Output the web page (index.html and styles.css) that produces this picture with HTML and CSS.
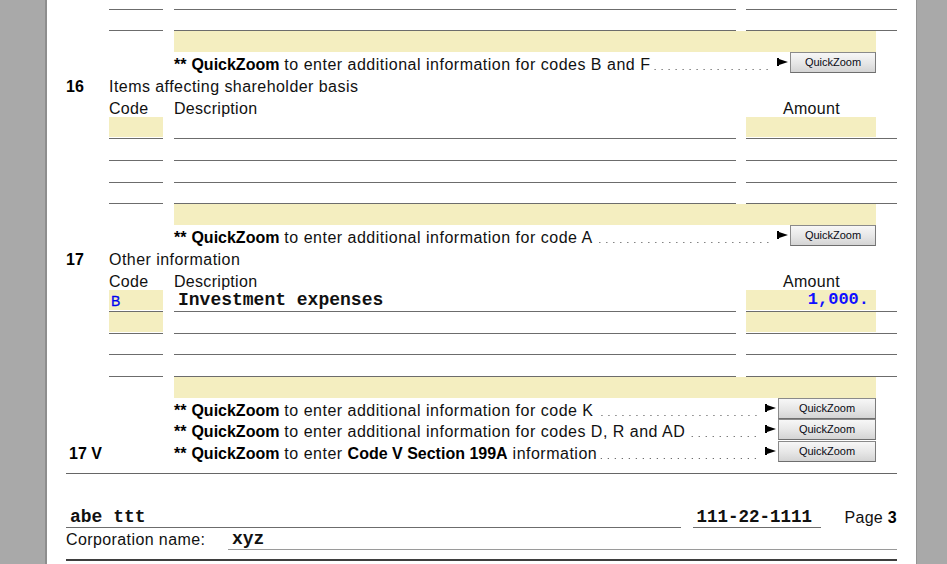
FILE: index.html
```html
<!DOCTYPE html>
<html>
<head>
<meta charset="utf-8">
<link rel="stylesheet" href="styles.css">
</head>
<body>
<div class="screen">
  <div class="gutter gutter-left"></div>
  <div class="page">
    <div class="form">
      <div class="row frow h10"><span></span><div class="f"></div><span></span><div class="f"></div><span></span><div class="f"></div></div>
      <div class="row frow h21"><span></span><div class="f"></div><span></span><div class="f"></div><span></span><div class="f"></div></div>
      <div class="row ybar"><div class="bar"></div></div>
      <div class="row qz h22">
        <div class="qzbox">
          <span class="qztext"><b>**</b> <b>QuickZoom</b> to enter additional information for codes B and F</span>
          <span class="leader"></span>
          <svg class="arrow" width="11" height="8" viewBox="0 0 11 8"><path d="M0 0H2V1L11 4L2 7V8H0Z" fill="#000"/></svg>
          <span class="btn">QuickZoom</span>
        </div>
      </div>
      <div class="row title h22"><span class="num">16</span><span class="label">Items affecting shareholder basis</span></div>
      <div class="row head h21"><span></span><span class="c-code">Code</span><span></span><span class="c-desc">Description</span><span></span><span class="c-amt">Amount</span></div>
      <div class="row frow h22"><span></span><div class="f"><div class="fill"></div></div><span></span><div class="f"></div><span></span><div class="f"><div class="fill amtfill"></div></div></div>
      <div class="row frow h22"><span></span><div class="f"></div><span></span><div class="f"></div><span></span><div class="f"></div></div>
      <div class="row frow h22"><span></span><div class="f"></div><span></span><div class="f"></div><span></span><div class="f"></div></div>
      <div class="row frow h21"><span></span><div class="f"></div><span></span><div class="f"></div><span></span><div class="f"></div></div>
      <div class="row ybar"><div class="bar"></div></div>
      <div class="row qz h22">
        <div class="qzbox">
          <span class="qztext"><b>**</b> <b>QuickZoom</b> to enter additional information for code A</span>
          <span class="leader"></span>
          <svg class="arrow" width="11" height="8" viewBox="0 0 11 8"><path d="M0 0H2V1L11 4L2 7V8H0Z" fill="#000"/></svg>
          <span class="btn">QuickZoom</span>
        </div>
      </div>
      <div class="row title h22"><span class="num">17</span><span class="label">Other information</span></div>
      <div class="row head h21"><span></span><span class="c-code">Code</span><span></span><span class="c-desc">Description</span><span></span><span class="c-amt">Amount</span></div>
      <div class="row frow h22"><span></span><div class="f"><div class="fill code-val">B</div></div><span></span><div class="f"><div class="mono desc-val">Investment expenses</div></div><span></span><div class="f"><div class="fill amtfill mono amt-val">1,000.</div></div></div>
      <div class="row frow h22"><span></span><div class="f"><div class="fill"></div></div><span></span><div class="f"></div><span></span><div class="f"><div class="fill amtfill"></div></div></div>
      <div class="row frow h21"><span></span><div class="f"></div><span></span><div class="f"></div><span></span><div class="f"></div></div>
      <div class="row frow h22"><span></span><div class="f"></div><span></span><div class="f"></div><span></span><div class="f"></div></div>
      <div class="row ybar"><div class="bar"></div></div>
      <div class="row qz h21">
        <div class="qzbox">
          <span class="qztext"><b>**</b> <b>QuickZoom</b> to enter additional information for code K</span>
          <span class="leader"></span>
          <svg class="arrow" width="11" height="8" viewBox="0 0 11 8"><path d="M0 0H2V1L11 4L2 7V8H0Z" fill="#000"/></svg>
          <span class="btn wide">QuickZoom</span>
        </div>
      </div>
      <div class="row qz h22">
        <div class="qzbox">
          <span class="qztext"><b>**</b> <b>QuickZoom</b> to enter additional information for codes D, R and AD</span>
          <span class="leader"></span>
          <svg class="arrow" width="11" height="8" viewBox="0 0 11 8"><path d="M0 0H2V1L11 4L2 7V8H0Z" fill="#000"/></svg>
          <span class="btn wide">QuickZoom</span>
        </div>
      </div>
      <div class="row qz h21">
        <span class="num num-v">17 V</span>
        <div class="qzbox">
          <span class="qztext"><b>**</b> <b>QuickZoom</b> to enter <b>Code V Section 199A</b> information</span>
          <span class="leader"></span>
          <svg class="arrow" width="11" height="8" viewBox="0 0 11 8"><path d="M0 0H2V1L11 4L2 7V8H0Z" fill="#000"/></svg>
          <span class="btn wide">QuickZoom</span>
        </div>
      </div>
      <div class="rule"></div>
      <div class="foot1">
        <div class="ff name-f mono wide-mono">abe ttt</div>
        <div class="ff ssn-f mono">111-22-1111</div>
        <div class="pagelbl">Page <b>3</b></div>
      </div>
      <div class="foot2">
        <div class="corp-lbl">Corporation name:</div>
        <div class="ff corp-f mono wide-mono">xyz</div>
      </div>
      <div class="thick"></div>
    </div>
  </div>
  <div class="gutter gutter-right"></div>
</div>
</body>
</html>
```

FILE: styles.css
```css
html, body {
  margin: 0;
  padding: 0;
  background: #ffffff;
}
body {
  font-family: "Liberation Sans", Arial, sans-serif;
  font-size: 16px;
  color: #111;
}
.screen {
  display: flex;
  width: 947px;
  height: 564px;
  overflow: hidden;
}
.gutter {
  background: #a9a9a9;
}
.gutter-left {
  flex: 0 0 45px;
  border-right: 2px solid #8e8e8e;
}
.gutter-right {
  flex: 1;
  border-left: 1px solid #929292;
}
.page {
  flex: 0 0 869px;
  background: #fff;
  padding-left: 19px;
  box-sizing: border-box;
}
.form {
  width: 831px;
}
.row {
  display: grid;
  grid-template-columns: 43px 54px 11px 562px 10px 151px;
}
.h10 { height: 10px; }
.h21 { height: 21px; }
.h22 { height: 22px; }

.f {
  box-sizing: border-box;
  height: 100%;
  border-bottom: 1px solid #6c6c6c;
}
.fill {
  height: 20px;
  background: #f4eec0;
}
.amtfill {
  width: 130px;
}
.code-val {
  color: #0000f0;
  font-size: 14px;
  line-height: 20px;
  padding-left: 2px;
  padding-top: 1px;
  box-sizing: border-box;
  -webkit-text-stroke: 0.3px #0000f0;
}
.mono {
  font-family: "Liberation Mono", "Courier New", monospace;
  font-weight: bold;
  font-size: 17.5px;
  line-height: 20px;
}
.wide-mono {
  font-size: 18px;
}
.desc-val {
  padding-left: 4px;
  color: #111;
  white-space: nowrap;
  font-size: 18px;
}
.amt-val {
  color: #1010ff;
  text-align: right;
  padding-right: 7px;
  box-sizing: border-box;
  font-size: 17px;
}

.ybar { height: 21px; }
.bar {
  grid-column: 4 / 7;
  background: #f4eec0;
  margin-right: 21px;
}

.qzbox {
  grid-column: 4 / 7;
  display: flex;
  align-items: flex-start;
  min-width: 0;
}
.qztext {
  line-height: 25px;
  white-space: nowrap;
  color: #111;
  letter-spacing: 0.5px;
}
.qztext b {
  color: #000;
  letter-spacing: 0;
}
.leader {
  flex: 1;
  align-self: stretch;
  margin-left: 2px;
  margin-right: 7px;
  background-image: linear-gradient(to right, #444 0, #444 1px, transparent 1px);
  background-size: 7px 1px;
  background-repeat: repeat-x;
  background-position: right 3px top 17px;
}
.arrow {
  margin-top: 6px;
  flex: none;
}
.btn {
  flex: none;
  box-sizing: border-box;
  width: 86px;
  height: 21px;
  margin-left: 2px;
  margin-right: 21px;
  border: 1px solid #8a8a8a;
  border-bottom-color: #6e6e6e;
  border-right-color: #7a7a7a;
  background: linear-gradient(#f7f7f7, #e6e6e6 55%, #d4d4d4);
  font-size: 11px;
  line-height: 19px;
  text-align: center;
  color: #0a0a14;
}
.btn.wide {
  width: 98px;
}

.title .num, .num {
  grid-column: 1;
  font-weight: bold;
  line-height: 25px;
  color: #000;
}
.num-v {
  padding-left: 3px;
}
.title .label {
  grid-column: 2 / 7;
  line-height: 25px;
  color: #111;
  letter-spacing: 0.45px;
}
.head span {
  line-height: 25px;
  color: #111;
  letter-spacing: 0.3px;
}
.c-code { grid-column: 2; }
.c-desc { grid-column: 4; }
.head .c-amt {
  grid-column: 6;
  width: 130px;
  text-align: center;
  padding-left: 1px;
  box-sizing: border-box;
}

.rule {
  margin-top: 11px;
  border-top: 1px solid #666;
}
.foot1 {
  display: flex;
  align-items: flex-end;
  height: 54px;
}
.ff {
  box-sizing: content-box;
  height: 20px;
  border-bottom: 1px solid #6c6c6c;
  padding-left: 4px;
  color: #111;
}
.name-f {
  width: 611px;
}
.ssn-f {
  width: 125px;
  margin-left: 12px;
}
.pagelbl {
  margin-left: 23px;
  line-height: 20px;
  height: 20px;
  color: #111;
  white-space: nowrap;
  letter-spacing: 0.3px;
}
.pagelbl b { color: #000; }
.foot2 {
  display: flex;
  align-items: flex-end;
  height: 22px;
}
.corp-lbl {
  line-height: 20px;
  height: 20px;
  color: #111;
  letter-spacing: 0.4px;
}
.corp-f {
  margin-left: auto;
  width: 665px;
  border-bottom-color: #9a9a9a;
}
.thick {
  margin-top: 9px;
  border-top: 2px solid #3e3e3e;
}
```
